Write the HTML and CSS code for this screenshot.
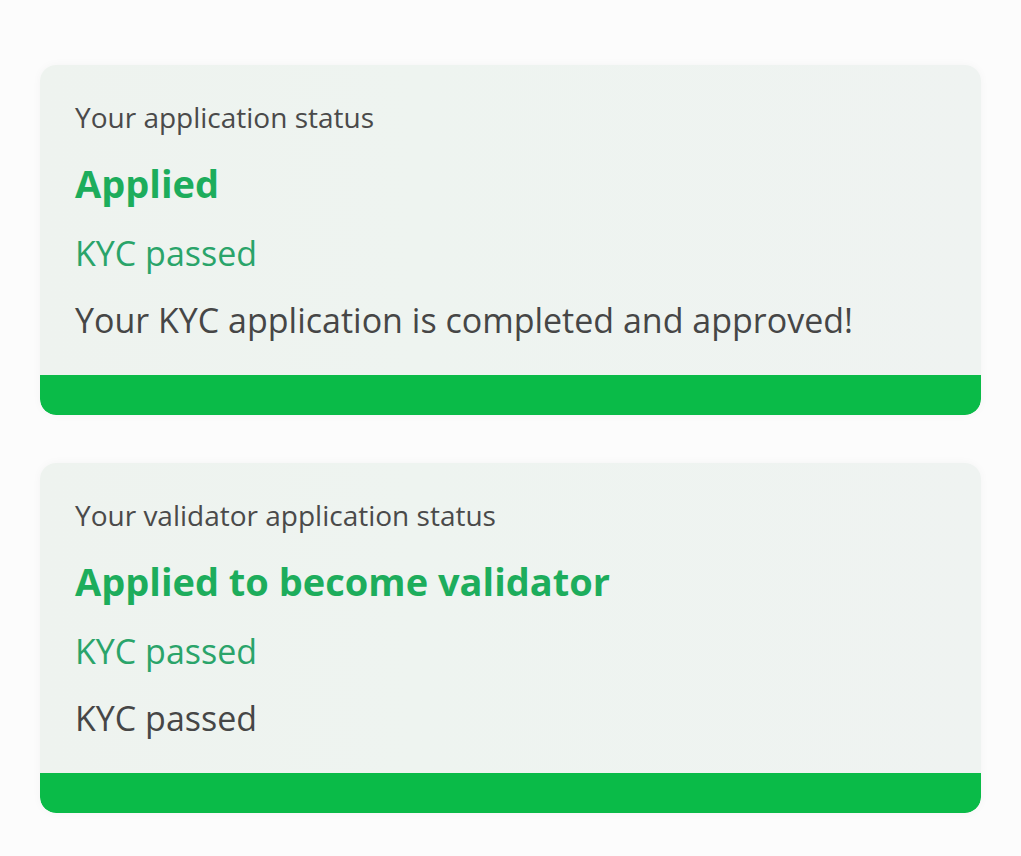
FILE: index.html
```html
<!DOCTYPE html>
<html lang="en">
<head>
<meta charset="utf-8">
<title>Application status</title>
<link rel="stylesheet" href="styles.css">
</head>
<body>
<main class="page">
  <section class="card">
    <div class="card-body">
      <p class="label">Your application status</p>
      <h2 class="heading">Applied</h2>
      <p class="kyc">KYC passed</p>
      <p class="desc">Your KYC application is completed and approved!</p>
    </div>
    <div class="bar"></div>
  </section>
  <section class="card">
    <div class="card-body">
      <p class="label">Your validator application status</p>
      <h2 class="heading">Applied to become validator</h2>
      <p class="kyc">KYC passed</p>
      <p class="desc">KYC passed</p>
    </div>
    <div class="bar"></div>
  </section>
</main>
</body>
</html>
```
FILE: styles.css
```css
html, body {
  margin: 0;
  padding: 0;
  background: #fcfcfc;
}
body {
  font-family: "Open Sans", Lato, "Liberation Sans", sans-serif;
  width: 1021px;
  height: 856px;
  overflow: hidden;
}
.page {
  display: flex;
  flex-direction: column;
  gap: 48px;
  padding: 65px 40px 0 40px;
}
.card {
  width: 941px;
  display: flex;
  flex-direction: column;
  border-radius: 16px;
  background: linear-gradient(90deg, #eef3ef 0%, #eef4f0 40%, #eff3f1 100%);
  box-shadow: 0 0 10px rgba(0, 0, 0, 0.035);
  overflow: hidden;
}
.card-body {
  height: 310px;
  box-sizing: border-box;
  padding: 32px 35px 0 35px;
  display: flex;
  flex-direction: column;
}
.card-body p, .card-body h2 {
  margin: 0;
  white-space: nowrap;
}
.label {
  height: 40px;
  line-height: 40px;
  font-size: 28px;
  color: #4a4a4a;
}
.heading {
  margin-top: 16px !important;
  height: 60px;
  line-height: 60px;
  font-size: 38px;
  font-weight: 700;
  color: #1dad5c;
}
.kyc {
  margin-top: 15px !important;
  height: 50px;
  line-height: 50px;
  font-size: 34px;
  color: #2aa46a;
}
.desc {
  margin-top: 17px !important;
  height: 50px;
  line-height: 50px;
  font-size: 34px;
  color: #464646;
}
.bar {
  height: 40px;
  background: #0abb48;
  border-radius: 0 0 16px 16px;
}
```
